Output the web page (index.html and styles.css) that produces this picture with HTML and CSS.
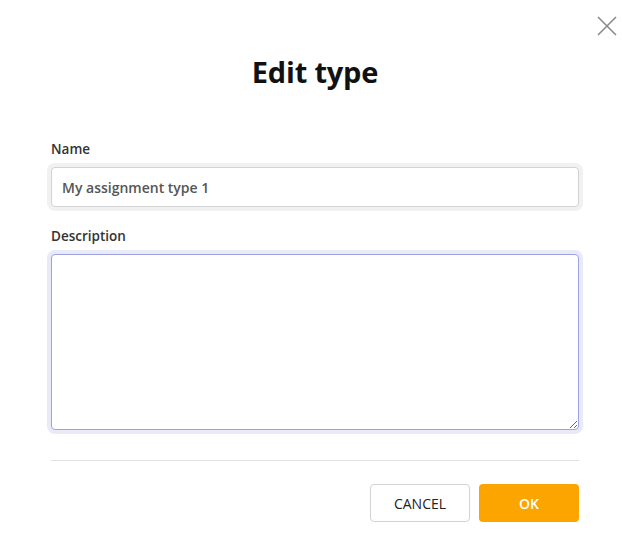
FILE: index.html
```html
<!DOCTYPE html>
<html>
<head>
<meta charset="utf-8">
<link rel="stylesheet" href="styles.css">
</head>
<body>
<div class="dialog">
  <button class="close" aria-label="Close">
    <svg width="20" height="20" viewBox="0 0 20 20"><path d="M1 1 L19 19 M19 1 L1 19" stroke="#8a8a8a" stroke-width="1.6" fill="none"/></svg>
  </button>
  <h1 class="title">Edit type</h1>
  <div class="field">
    <label class="label">Name</label>
    <input class="input" type="text" value="My assignment type 1">
  </div>
  <div class="field">
    <label class="label">Description</label>
    <textarea class="textarea"></textarea>
  </div>
  <div class="divider"></div>
  <div class="actions">
    <button class="btn btn-cancel">CANCEL</button>
    <button class="btn btn-ok">OK</button>
  </div>
</div>
</body>
</html>
```
FILE: styles.css
```css
* { box-sizing: border-box; }
html, body { margin: 0; padding: 0; background: #fff; }
body { font-family: "Open Sans", "Liberation Sans", sans-serif; color: #222; }
.dialog { position: relative; width: 622px; height: 556px; padding: 54px 43px 0 51px; }
.close { position: absolute; top: 16px; right: 5px; width: 20px; height: 20px; padding: 0; border: 0; background: none; cursor: pointer; }
.close svg { display: block; }
.title { margin: 0 0 50px; text-align: center; font-size: 29px; font-weight: 700; line-height: 36px; color: #111; letter-spacing: -0.2px; }
.field { display: flex; flex-direction: column; }
.label { font-size: 13.5px; font-weight: 600; line-height: 18px; color: #333; margin-bottom: 9px; }
.input { height: 40px; width: 100%; border: 1px solid #d3d3d3; border-radius: 4px; box-shadow: 0 0 0 4px #f1f1f1; padding: 0 10px; font-family: inherit; font-size: 14px; font-weight: 600; color: #555; outline: none; }
.field + .field { margin-top: 20px; }
.textarea { height: 176px; width: 100%; border: 1px solid #9ea2e0; border-radius: 4px; box-shadow: 0 0 0 4px #e9eaf8; font-family: inherit; font-size: 14px; outline: none; resize: vertical; display: block; }
.divider { height: 1px; background: #e3e3e3; margin-top: 30px; }
.actions { display: flex; justify-content: flex-end; gap: 9px; margin-top: 23px; }
.btn { width: 100px; height: 38px; border-radius: 4px; font-family: inherit; font-size: 14px; cursor: pointer; }
.btn-cancel { background: #fff; border: 1px solid #d3d3d3; color: #222; font-weight: 400; }
.btn-ok { background: #fca500; border: 0; color: #fff; font-weight: 600; }
```
